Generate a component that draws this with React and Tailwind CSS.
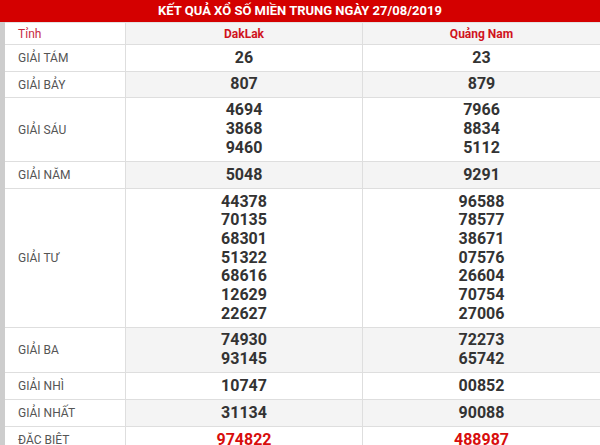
import React from "react";

const rows = [
  { label: "GIẢI TÁM", h: "h-[27px]", a: ["26"], b: ["23"] },
  { label: "GIẢI BẢY", h: "h-[26px]", a: ["807"], b: ["879"], gray: true },
  { label: "GIẢI SÁU", h: "h-[64px]", a: ["4694", "3868", "9460"], b: ["7966", "8834", "5112"] },
  { label: "GIẢI NĂM", h: "h-[27px]", a: ["5048"], b: ["9291"], gray: true },
  {
    label: "GIẢI TƯ",
    h: "h-[139px]",
    a: ["44378", "70135", "68301", "51322", "68616", "12629", "22627"],
    b: ["96588", "78577", "38671", "07576", "26604", "70754", "27006"],
  },
  { label: "GIẢI BA", h: "h-[45px]", a: ["74930", "93145"], b: ["72273", "65742"], gray: true },
  { label: "GIẢI NHÌ", h: "h-[27px]", a: ["10747"], b: ["00852"] },
  { label: "GIẢI NHẤT", h: "h-[27px]", a: ["31134"], b: ["90088"], gray: true },
  { label: "ĐẶC BIỆT", h: "h-[27px]", a: ["974822"], b: ["488987"], special: true },
];

function NumCell({ nums, gray, special, last }) {
  return (
    <div
      className={
        (last ? "flex-1 " : "w-[237px] border-r border-[#dedede] ") +
        (gray ? "bg-[#f4f4f4] " : "bg-white ") +
        "flex flex-col items-center justify-center"
      }
    >
      {nums.map((n) => (
        <div
          key={n}
          className={
            "text-[16px] leading-[18.7px] font-bold " +
            (special ? "text-[#d80d0d]" : "text-[#333]")
          }
        >
          {n}
        </div>
      ))}
    </div>
  );
}

export default function App() {
  return (
    <div className="w-[600px] h-[445px] overflow-hidden bg-white font-['Roboto','Liberation_Sans',sans-serif]">
      <div className="h-[22px] bg-[#d40000] text-white font-bold text-[13px] flex items-center justify-center">
        KẾT QUẢ XỔ SỐ MIỀN TRUNG NGÀY 27/08/2019
      </div>
      <div className="flex">
        <div className="w-[5px] bg-[#cdcdcd]" />
        <div className="flex-1 border-t border-[#e2e2e2]">
          <div className="h-[22px] flex border-b border-[#dedede]">
            <div className="w-[121px] border-r border-[#dedede] pl-[13px] flex items-center text-[12px] text-[#c8283f]">
              Tỉnh
            </div>
            <div className="w-[237px] border-r border-[#dedede] bg-[#f4f4f4] flex items-center justify-center text-[12px] font-bold text-[#d0131d]">
              DakLak
            </div>
            <div className="flex-1 bg-[#f4f4f4] flex items-center justify-center text-[12px] font-bold text-[#d0131d]">
              Quảng Nam
            </div>
          </div>
          {rows.map((r) => (
            <div key={r.label} className={r.h + " flex border-b border-[#dedede]"}>
              <div className="w-[121px] border-r border-[#dedede] pl-[13px] flex items-center text-[12px] text-[#555]">
                {r.label}
              </div>
              <NumCell nums={r.a} gray={r.gray} special={r.special} />
              <NumCell nums={r.b} gray={r.gray} special={r.special} last />
            </div>
          ))}
        </div>
      </div>
    </div>
  );
}
